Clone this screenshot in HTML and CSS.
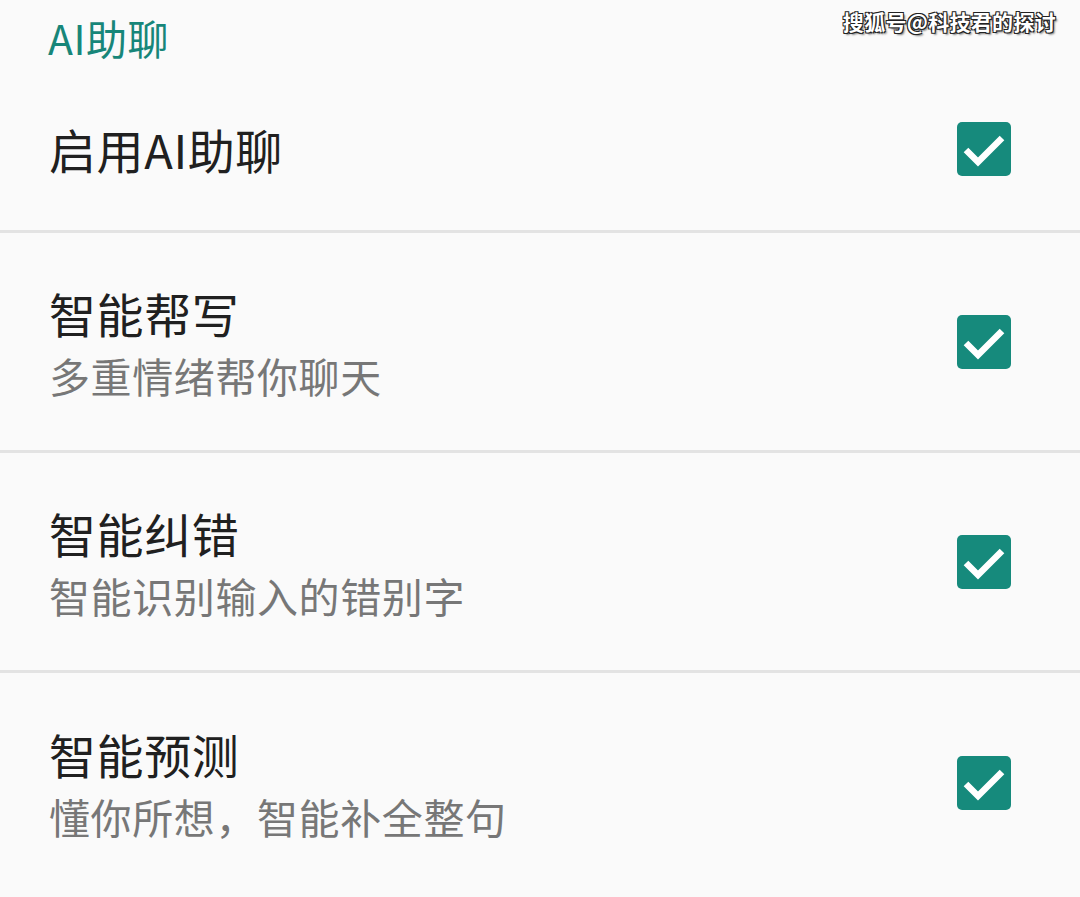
FILE: index.html
```html
<!DOCTYPE html>
<html lang="zh-CN">
<head>
    <meta charset="UTF-8">
    <meta name="viewport" content="width=device-width, initial-scale=1.0">
    <title>AI助聊</title>
    <link rel="stylesheet" href="styles.css">
</head>
<body>
    <div class="screen">
        <div class="watermark">搜狐号@科技君的探讨</div>

        <div class="category">AI助聊</div>

        <div class="pref pref-first">
            <div class="pref-text">
                <div class="pref-title">启用AI助聊</div>
            </div>
            <span class="checkbox">
                <svg viewBox="0 0 54 54" width="54" height="54"><polyline points="9,28 21,40 45,16"/></svg>
            </span>
        </div>

        <div class="pref">
            <div class="pref-text">
                <div class="pref-title">智能帮写</div>
                <div class="pref-summary">多重情绪帮你聊天</div>
            </div>
            <span class="checkbox">
                <svg viewBox="0 0 54 54" width="54" height="54"><polyline points="9,28 21,40 45,16"/></svg>
            </span>
        </div>

        <div class="pref">
            <div class="pref-text">
                <div class="pref-title">智能纠错</div>
                <div class="pref-summary">智能识别输入的错别字</div>
            </div>
            <span class="checkbox">
                <svg viewBox="0 0 54 54" width="54" height="54"><polyline points="9,28 21,40 45,16"/></svg>
            </span>
        </div>

        <div class="pref">
            <div class="pref-text">
                <div class="pref-title">智能预测</div>
                <div class="pref-summary">懂你所想，智能补全整句</div>
            </div>
            <span class="checkbox">
                <svg viewBox="0 0 54 54" width="54" height="54"><polyline points="9,28 21,40 45,16"/></svg>
            </span>
        </div>
    </div>
</body>
</html>
```

FILE: styles.css
```css
* {
    margin: 0;
    padding: 0;
    box-sizing: border-box;
    font-family: "Noto Sans CJK SC", "Noto Sans", sans-serif;
}

body {
    background-color: #fafafa;
    color: #212121;
}

.screen {
    position: relative;
    width: 1080px;
    height: 897px;
    overflow: hidden;
}

.watermark {
    position: absolute;
    top: 6px;
    right: 24px;
    font-size: 21px;
    font-weight: bold;
    color: #fff;
    letter-spacing: 0.3px;
    text-shadow: 1px 1px 0 #222, -1px -1px 0 #222, 1px -1px 0 #222, -1px 1px 0 #222, 2px 2px 2px rgba(0, 0, 0, 0.5);
}

.category {
    height: 68px;
    padding: 6px 0 0 48px;
    font-size: 41px;
    line-height: 62px;
    letter-spacing: 0.5px;
    color: #178679;
}

.pref {
    display: flex;
    align-items: center;
    justify-content: space-between;
    height: 220px;
    padding: 0 69px 0 49px;
    border-bottom: 3px solid #e3e3e3;
}

.pref-first {
    height: 165px;
}

.pref:last-child {
    border-bottom: none;
}

.pref-text {
    padding-top: 4px;
}

.pref-first .pref-text {
    padding-top: 0;
}

.pref-title {
    font-size: 47px;
    line-height: 62px;
    letter-spacing: 0.6px;
    color: #202020;
}

.pref-summary {
    font-size: 41px;
    line-height: 62px;
    letter-spacing: 0.6px;
    color: #777;
}

.checkbox {
    display: block;
    width: 54px;
    height: 54px;
    border-radius: 5px;
    background-color: #168a7c;
}

.checkbox svg {
    display: block;
}

.checkbox polyline {
    fill: none;
    stroke: #fff;
    stroke-width: 6.5;
}
```
